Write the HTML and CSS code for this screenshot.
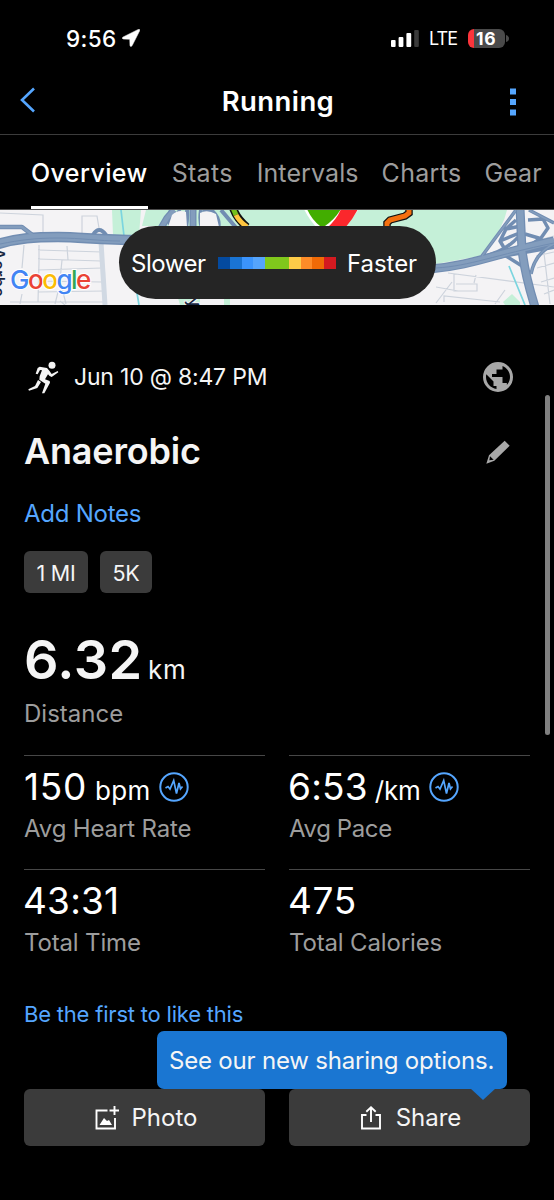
FILE: index.html
```html
<!DOCTYPE html>
<html lang="en">
<head>
<meta charset="utf-8">
<title>Running</title>
<link rel="stylesheet" href="styles.css">
</head>
<body>
<div class="screen">
  <div class="status">
    <span class="time">9:56</span>
    <svg class="locate" width="18" height="18" viewBox="0 0 18 18"><path d="M.8 8.200Q-.4 9.800 1.600 10L7.800 10.200 8 16.400Q8.400 18.400 10 16.800L17.600 1.800Q18 0 16.400.4Z" fill="#fff" stroke="#fff" stroke-width=".6"/></svg>
    <svg class="signal" width="28" height="17" viewBox="0 0 28 17"><g fill="#fff"><rect y="10" width="4.6" height="7" rx="1"/><rect x="7.6" y="7" width="4.8" height="10" rx="1"/><rect x="15.4" y="3" width="4.8" height="14" rx="1"/></g><rect x="23.2" width="4.6" height="17" rx="1" fill="#3a3a3a"/></svg>
    <span class="lte">LTE</span>
    <span class="battery"><span class="level">16</span></span>
    <svg class="nub" width="3" height="7" viewBox="0 0 3 7"><path d="M0 0Q3 1 3 3.5T0 7Z" fill="#4a4a4a"/></svg>
  </div>

  <header class="header">
    <svg class="back" width="16" height="26" viewBox="0 0 16 26"><path d="M14 1.5 2 13 14 24.500" fill="none" stroke="#55a6ff" stroke-width="2.6"/></svg>
    <h1 class="header-title">Running</h1>
    <svg class="more" width="6" height="28" viewBox="0 0 6 28" fill="#55a6ff"><path d="M0 .5h6v6H0zM0 11h6v6H0zM0 21.500h6v6H0z"/></svg>
  </header>

  <nav class="tabs">
    <span class="tab active">Overview</span>
    <span class="tab stats">Stats</span>
    <span class="tab intervals">Intervals</span>
    <span class="tab charts">Charts</span>
    <span class="tab">Gear</span>
  </nav>

  <div class="map">
    <svg class="map-canvas" width="554" height="95" viewBox="0 0 554 95">
      <rect width="554" height="95" fill="#f4f3f5"/>
      <g fill="#c5f0d8">
        <path d="M112 0H141L139 25H113ZM146 0H507Q503 18 489 35L480 46 436 54V50L400 16H142ZM178 88H200V95H180ZM224 88H230V95H224ZM503 92 512 84 520 92V95H505Z"/>
        <path d="M380 10H450V51H425Z"/>
      </g>
      <g fill="none" stroke="#cdd3dc" stroke-width="1.200">
        <path d="M0 3 43 5V26M82 24V6H97L99 18M39 35V52L38 92M67 36 68 50M38 40 102 42M38 49 101 51M38 60 102 58M38 71 102 72M38 82 104 81M62 50 60 70 66 94M24 35 22 58M20 94 22 84M10 92H104M58 82 55 94M448 63 554 77M454 64V81H477V74H456M436 77 458 81M444 92V86L500 92M474 73 476 65M436 93 452 72M539 30 554 26M536 46 554 42M537 58 554 53M541 72 554 68M544 84 554 80M542 26 550 94M495 94 505 80M60 91 65 95"/>
        <path d="M101 32 105 95" stroke-width="5" stroke="#d1d9e3"/>
      </g>
      <g fill="none" stroke="#7bd5df" stroke-width="1.700"><path d="M121 0 124 26M137 83 139 95M509 56 525 95"/></g>
      <g fill="none" stroke-linejoin="round">
        <g stroke="#718db2">
          <path d="M0 17H22L35 27H58" stroke-width="4.500"/>
          <path d="M-2 34C18 28 35 27 58 27S99 30 140 30" stroke-width="10.500"/>
          <path d="M93 25Q99 15 106 25" stroke-width="4"/>
          <path d="M160 20 167 8 174 0M193 0V20" stroke-width="7"/>
          <path d="M171 0Q167 10 172 18M201 0Q198 18 208 26M187 0Q188 15 183 28M203 0H211Q221 8 218 20M221 0 238 20M178 0 186 10" stroke-width="4"/>
          <path d="M430 59C470 56 495 44 554 31" stroke-width="9"/>
          <path d="M480 50 554 37" stroke-width="4"/>
          <path d="M520-2 522 40Q525 65 535 97" stroke-width="9"/>
          <path d="M516 0 482 46M529 0 554 13M516 10 506 19 500 31 506 41M506 19 521 16M500 31 522 22M528 10 543 9 548 18 541 28 526 38M506 46 522 56M554 34Q535 43 531 64M481 47Q506 42 520 25M525 24 542 29" stroke-width="3.500"/>
        </g>
        <g stroke="#839dbd">
          <path d="M0 17H22L35 27H58" stroke-width="2.500"/>
          <path d="M-2 34C18 28 35 27 58 27S99 30 140 30" stroke-width="7.500"/>
          <path d="M160 20 167 8 174 0M193 0V20" stroke-width="4.500"/>
          <path d="M430 59C470 56 495 44 554 31M520-2 522 40Q525 65 535 97" stroke-width="6.500"/>
          <path d="M516 0 482 46M529 0 554 13M554 34Q535 43 531 64" stroke-width="1.500"/>
        </g>
        <path d="M0 34C20 30 35 28 58 28S99 31 120 31M436 58C470 56 495 45 554 33" stroke="#718db2" stroke-width="1"/>
        <g fill="#f4f3f5"><path d="M172 5Q178-1 186 2L187 17H168ZM200 3Q207-1 216 4L219 17H200Z"/></g>
      </g>
      <path d="M233-2Q237 9 247 17" fill="none" stroke="#111" stroke-width="8"/>
      <path d="M233-2 236 5" fill="none" stroke="#75bf1c" stroke-width="5"/>
      <path d="M236 5Q239 11 247 17" fill="none" stroke="#ffc640" stroke-width="5"/>
      <path d="M304-1Q309 10 319 20H333Q350 13 359-1Z" fill="#fff"/>
      <path d="M307-1Q312 10 320 16H325Q335 9 341-1Z" fill="#42ad00"/>
      <path d="M341-1H358Q353 9 345 18H327Q337 9 341-1Z" fill="#fb272c"/>
      <path d="M409-2V3L405 6 390 10 387 13V18" fill="none" stroke="#111" stroke-width="7.500"/>
      <path d="M409-2V3L405 6 390 10 387 13V18" fill="none" stroke="#f4700f" stroke-width="5"/>
      <text class="street" transform="translate(-8 38) rotate(90)">Aerba</text>
      <text class="street" transform="translate(184 80) rotate(70)">by</text>
      <text class="google" x="10" y="79"><tspan fill="#4285f4">G</tspan><tspan fill="#ea4335">o</tspan><tspan fill="#fbbc05">o</tspan><tspan fill="#4285f4">g</tspan><tspan fill="#34a853">l</tspan><tspan fill="#ea4335">e</tspan></text>
    </svg>
    <div class="legend">
      <span class="slower">Slower</span>
      <span class="scale"><i class="c1"></i><i class="c2"></i><i class="c3"></i><i class="c4"></i><i class="c5"></i><i class="c5"></i><i class="c6"></i><i class="c7"></i><i class="c8"></i><i class="c9"></i></span>
      <span class="faster">Faster</span>
    </div>
  </div>

  <main class="content">
    <div class="date-row">
      <svg class="runner" width="31" height="33" viewBox="85 62 93 99" fill="#f4f4f4"><circle cx="157" cy="75" r="10.500"/><path d="M120 79 142 83 149 91 156 101 174 92 176 96 156 110 150 107 145 102 136 117 150 122 151 127 134 159H127L137 130 119 118 120 108 127 90 121 89 114 102 108 100 114 83ZM115 119 124 125 113 143 88 151 86 147 106 137Z"/></svg>
      <span class="date">Jun 10 @ 8:47 PM</span>
      <svg class="globe" width="36" height="36" viewBox="0 0 24 24" fill="#a8a8a8"><path fill-rule="evenodd" d="M12 2a10 10 0 1 0 0 20 10 10 0 0 0 0-20ZM11 19.930C7.050 19.440 4 16.080 4 12c0-.62.08-1.210.21-1.790L9 15v3h2ZM17.900 17.390V16H15v-4H8v-2h3V7h4V4.590c2.930 1.190 5 4.060 5 7.410 0 2.080-.8 3.970-2.100 5.390Z"/></svg>
    </div>
    <div class="title-row">
      <h2 class="title">Anaerobic</h2>
      <svg class="pencil" width="24" height="24" viewBox="138 300 72 72" fill="#a8a8a8"><path fill-rule="evenodd" d="M194 302 209 317 163 362 139 371 147 346ZM150 349 148 361 161 359Z"/></svg>
    </div>
    <a class="notes">Add Notes</a>
    <div class="chips"><span class="chip first">1 MI</span><span class="chip">5K</span></div>
    <div class="distance"><span class="big">6.32</span><span class="big-unit">km</span></div>
    <div class="label distance-label">Distance</div>

    <div class="grid">
      <div class="cell">
        <div class="value"><span class="num hr">150</span><span class="unit bpm">bpm</span><svg class="pulse" width="30" height="30" viewBox="0 0 30 30" fill="none" stroke="#55a6ff"><circle cx="15" cy="15" r="13.700" stroke-width="2"/><path d="M6.500 16 9 14.500 11 17 14.700 8.500 17.500 21.500 20 11 21.500 17 23.500 14.500" stroke-width="1.700"/></svg></div>
        <div class="label">Avg Heart Rate</div>
      </div>
      <div class="cell">
        <div class="value"><span class="num pace">6:53</span><span class="unit per-km">/km</span><svg class="pulse" width="30" height="30" viewBox="0 0 30 30" fill="none" stroke="#55a6ff"><circle cx="15" cy="15" r="13.700" stroke-width="2"/><path d="M6.500 16 9 14.500 11 17 14.700 8.500 17.500 21.500 20 11 21.500 17 23.500 14.500" stroke-width="1.700"/></svg></div>
        <div class="label tight">Avg Pace</div>
      </div>
      <div class="cell">
        <div class="value"><span class="num total">43:31</span></div>
        <div class="label">Total Time</div>
      </div>
      <div class="cell">
        <div class="value"><span class="num cal">475</span></div>
        <div class="label">Total Calories</div>
      </div>
    </div>

    <a class="like">Be the first to like this</a>
    <div class="actions">
      <div class="button">
        <svg class="photo-icon" width="24" height="24" viewBox="0 0 24 24" fill="none" stroke="#fff" stroke-width="1.900"><path d="M12.500 4.500H1.500V22.500H20V12M14.500 4.500H24M19.500 0V9"/><path d="M4.500 19 9 12 12 15 14 14 17 19Z" fill="#fff" stroke="none"/></svg>
        <span>Photo</span>
      </div>
      <div class="button">
        <svg class="share-icon" width="20" height="24" viewBox="0 0 20 24" fill="none" stroke="#fff" stroke-width="1.900"><path d="M5.500 9H1V22.500H19V9H14.500M10 16V2M5.300 5.800 10 1.300 14.700 5.800"/></svg>
        <span>Share</span>
        <div class="tooltip">See our new sharing options.</div>
      </div>
    </div>
  </main>
  <div class="scrollbar"></div>
</div>
</body>
</html>
```

FILE: styles.css
```css
* { box-sizing: border-box; }
body { margin: 0; background: #000; color: #fff; font-family: Inter, "Liberation Sans", sans-serif; white-space: nowrap; }
svg { display: block; flex: none; }
.screen { position: relative; width: 554px; height: 1200px; overflow: hidden; background: #000; }

.status { display: flex; align-items: center; height: 66px; padding: 10px 0 0 66px; }
.time { width: 56px; font-size: 22.5px; font-weight: 500; letter-spacing: .4px; }
.locate { margin-top: -1px; }
.signal { margin-left: 251px; }
.lte { width: 39px; margin-left: 10px; padding-top: 1px; font-size: 18px; letter-spacing: -.9px; }
.battery { display: flex; align-items: center; width: 37px; height: 19px; padding-left: 8px; border-radius: 6px; background: linear-gradient(to right, #fb343b 6.5px, #4a4a4a 6.5px); }
.level { font-size: 17.5px; font-weight: 700; letter-spacing: .8px; }
.nub { margin-left: 1px; }

.header { display: flex; align-items: center; justify-content: space-between; height: 69px; padding: 0 38px 0 20px; border-bottom: 1px solid #3c3c3c; }
.header-title { margin: 2px 0 0 10px; font-size: 27.5px; font-weight: 600; letter-spacing: .4px; line-height: 40px; }
.more { margin-top: 3px; }

.tabs { display: flex; height: 75px; padding-left: 31px; gap: 24px; border-bottom: 1px solid #4b4b4b; color: #9d9d9d; font-size: 25px; line-height: 76px; letter-spacing: .1px; }
.tab { height: 74px; }
.tab.active { color: #fff; font-weight: 500; letter-spacing: .4px; border-bottom: 3px solid #fff; }
.tab.stats { letter-spacing: .3px; }
.tab.intervals { margin-right: -1px; }
.tab.charts { letter-spacing: .3px; margin-right: -1px; }

.map { position: relative; height: 95px; }
.street { fill: #17263f; font-size: 17px; font-weight: 500; stroke: #f4f3f5; stroke-width: 2px; paint-order: stroke; }
.google { font-size: 26px; font-weight: 500; letter-spacing: -1.5px; stroke: #fff; stroke-width: 2px; paint-order: stroke; }
.legend { position: absolute; left: 119px; top: 16px; display: flex; align-items: center; width: 317px; height: 73px; padding-left: 12px; border-radius: 37px; background: #252525; font-size: 24px; }
.slower { width: 87px; padding-top: 2px; letter-spacing: -.45px; }
.faster { padding: 2px 0 0 11px; letter-spacing: -.05px; }
.scale { display: grid; grid-template-columns: repeat(10, 1fr); width: 118px; height: 12px; }
.c1 { background: #044a9f; }
.c2 { background: #1a74d3; }
.c3 { background: #3b94fc; }
.c4 { background: #55a4fc; }
.c5 { background: #80c81c; }
.c6 { background: #fecc48; }
.c7 { background: #fe8c28; }
.c8 { background: #f06a06; }
.c9 { background: #d41a20; }

.content { padding: 52px 24px 0; color: #f5f5f5; }
.date-row { display: flex; align-items: center; height: 40px; padding-left: 4px; }
.date { margin-left: 15px; font-size: 23px; letter-spacing: -.2px; }
.globe { margin-left: auto; margin-right: 14px; }
.title-row { display: flex; align-items: center; justify-content: space-between; height: 42px; margin-top: 33px; padding-right: 20px; }
.title { margin: 0; font-size: 36px; font-weight: 600; letter-spacing: -.2px; line-height: 42px; }
.pencil { margin-top: 2px; }
.notes { display: block; margin-top: 26px; color: #55a6ff; font-size: 24px; line-height: 32px; letter-spacing: -.25px; }
.chips { display: flex; gap: 12px; margin-top: 21px; }
.chip { width: 52px; height: 42px; border-radius: 6px; background: #3b3b3b; font-size: 21.5px; line-height: 44px; text-align: center; letter-spacing: -.2px; }
.chip.first { width: 64px; }
.distance { display: flex; align-items: baseline; height: 60px; margin-top: 37px; line-height: 60px; }
.big { width: 125px; font-size: 54px; font-weight: 600; letter-spacing: .5px; }
.big-unit { font-size: 26px; letter-spacing: .8px; margin-left: -1px; }
.label { margin-top: 7px; color: #9d9d9d; font-size: 24px; line-height: 30px; letter-spacing: -.15px; }
.label.distance-label { margin-top: 9px; letter-spacing: 0; }
.label.tight { letter-spacing: -.4px; }

.grid { display: grid; grid-template-columns: 241px 241px; grid-auto-rows: 114px; column-gap: 24px; margin-top: 26px; }
.cell { padding-top: 11px; border-top: 1px solid #474747; }
.value { display: flex; align-items: baseline; height: 40px; line-height: 40px; color: #fff; }
.num { font-size: 37px; }
.hr { letter-spacing: .7px; }
.pace { letter-spacing: .2px; margin-left: -1px; }
.total { letter-spacing: .2px; margin-left: -1px; }
.cal { letter-spacing: .6px; margin-left: -1px; }
.unit { margin-left: 8px; font-size: 26px; }
.bpm { letter-spacing: .4px; }
.per-km { margin-left: 7px; letter-spacing: -.2px; }
.pulse { align-self: center; margin-left: 8px; }

.like { display: block; margin-top: 16px; color: #55a6ff; font-size: 22px; line-height: 30px; letter-spacing: -.2px; }
.actions { display: flex; gap: 24px; margin-top: 60px; }
.button { position: relative; display: flex; align-items: center; justify-content: center; width: 241px; height: 57px; border-radius: 6px; background: #3b3b3b; font-size: 24px; padding-left: 3px; }
.photo-icon { margin-right: 13px; }
.share-icon { margin-right: 15px; }
.tooltip { position: absolute; right: 23px; bottom: 57px; width: 350px; height: 58px; padding-left: 12px; border-radius: 7px; background: #1a76d2; line-height: 59px; letter-spacing: -.2px; }
.tooltip::after { content: ""; position: absolute; right: 11px; top: 57px; border: 13px solid transparent; border-top: 12px solid #1a76d2; border-bottom: 0; }
.scrollbar { position: absolute; left: 545px; top: 395px; width: 4.5px; height: 340px; border-radius: 3px; background: #808080; }
```
